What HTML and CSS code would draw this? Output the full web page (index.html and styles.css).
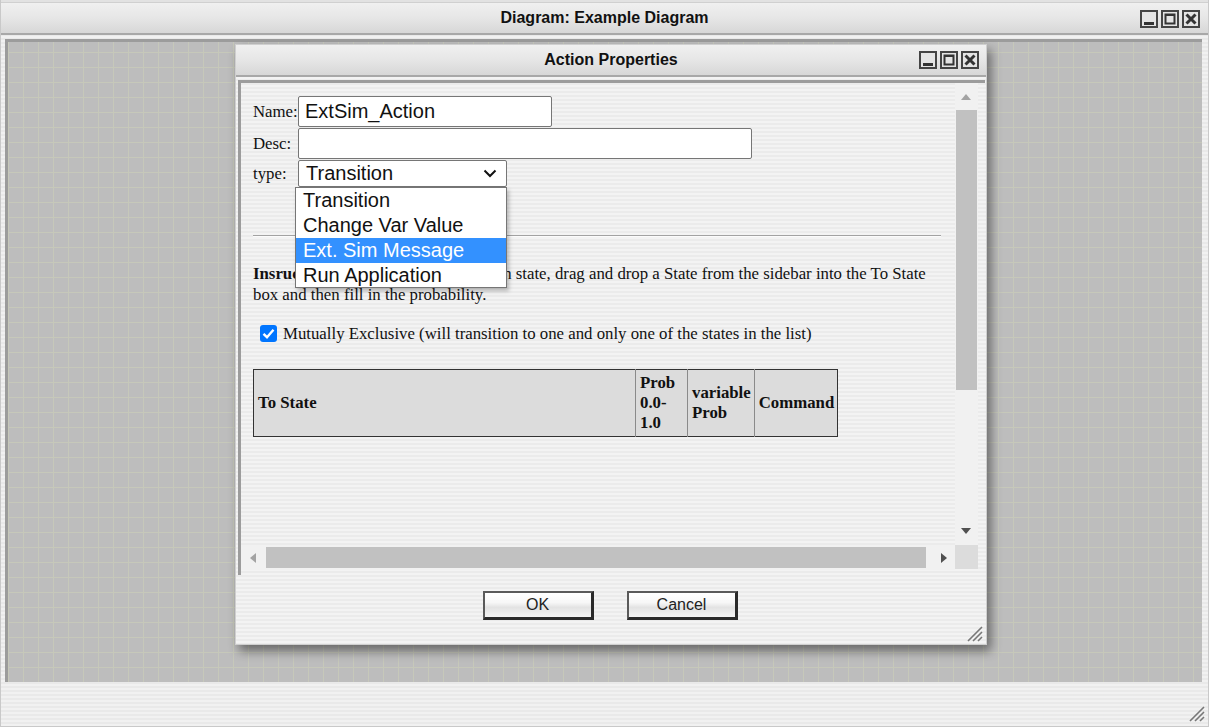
FILE: index.html
```html
<!DOCTYPE html>
<html>
<head>
<meta charset="utf-8">
<title>Diagram: Example Diagram</title>
<link rel="stylesheet" href="styles.css">
</head>
<body>
<div class="win">
  <div class="win-top"></div>
  <div class="titlebar">
    <span class="title">Diagram: Example Diagram</span>
    <div class="ctrls ctrls-outer">
      <svg class="wbtn" width="18" height="18" viewBox="0 0 18 18"><rect x="1" y="1" width="16" height="16" class="wb-bg"/><rect x="4" y="12" width="10" height="3" fill="#333"/></svg>
      <svg class="wbtn" width="18" height="18" viewBox="0 0 18 18"><rect x="1" y="1" width="16" height="16" class="wb-bg"/><rect x="4.5" y="4.5" width="9" height="9" fill="none" stroke="#333" stroke-width="2"/><rect x="4" y="4" width="10" height="2" fill="#333"/></svg>
      <svg class="wbtn" width="18" height="18" viewBox="0 0 18 18"><rect x="1" y="1" width="16" height="16" class="wb-bg"/><path d="M4.5 4.5 L13.5 13.5 M13.5 4.5 L4.5 13.5" stroke="#333" stroke-width="3"/></svg>
    </div>
  </div>
  <div class="win-body">
    <div class="canvas"></div>
  </div>
  <div class="win-foot">
    <svg class="grip" width="18" height="18" viewBox="0 0 18 18"><path d="M17 3 L3 17 M17 8 L8 17 M17 13 L13 17" stroke="#777" stroke-width="1.6"/></svg>
  </div>

  <div class="dialog">
    <div class="titlebar dtitle">
      <span class="title">Action Properties</span>
      <div class="ctrls ctrls-dlg">
        <svg class="wbtn" width="18" height="18" viewBox="0 0 18 18"><rect x="1" y="1" width="16" height="16" class="wb-bg"/><rect x="4" y="12" width="10" height="3" fill="#333"/></svg>
        <svg class="wbtn" width="18" height="18" viewBox="0 0 18 18"><rect x="1" y="1" width="16" height="16" class="wb-bg"/><rect x="4.5" y="4.5" width="9" height="9" fill="none" stroke="#333" stroke-width="2"/><rect x="4" y="4" width="10" height="2" fill="#333"/></svg>
        <svg class="wbtn" width="18" height="18" viewBox="0 0 18 18"><rect x="1" y="1" width="16" height="16" class="wb-bg"/><path d="M4.5 4.5 L13.5 13.5 M13.5 4.5 L4.5 13.5" stroke="#333" stroke-width="3"/></svg>
      </div>
    </div>
    <div class="pane">
      <div class="scroller">
        <div class="content">
          <div class="frow"><span class="flabel">Name:</span><div class="field f-name">ExtSim_Action</div></div>
          <div class="frow"><span class="flabel">Desc:</span><div class="field f-desc"></div></div>
          <div class="frow"><span class="flabel">type:</span><div class="field f-select">Transition
            <svg class="chev" width="14" height="9" viewBox="0 0 14 9"><path d="M1.5 1.5 L7 7 L12.5 1.5" fill="none" stroke="#111" stroke-width="2"/></svg></div></div>
          <div class="rule"></div>
          <p class="instr"><b>Insructions:</b> To add another transition state, drag and drop a State from the sidebar into the To State box and then fill in the probability.</p>
          <div class="chkrow">
            <span class="chk"><svg width="17" height="17" viewBox="0 0 17 17"><path d="M3.5 8.8 L7 12.2 L13.5 4.8" fill="none" stroke="#fff" stroke-width="2.4"/></svg></span>
            <span>Mutually Exclusive (will transition to one and only one of the states in the list)</span>
          </div>
          <table class="tbl">
            <tr>
              <th class="c1">To State</th>
              <th class="c2">Prob 0.0-1.0</th>
              <th class="c3">variable Prob</th>
              <th class="c4">Command</th>
            </tr>
          </table>
        </div>
        <div class="vscroll">
          <span class="arr arr-up"></span>
          <span class="vthumb"></span>
          <span class="arr arr-down"></span>
        </div>
        <div class="hscroll">
          <span class="arr arr-left"></span>
          <span class="hthumb"></span>
          <span class="arr arr-right"></span>
        </div>
        <div class="corner"></div>
      </div>
    </div>
    <div class="dfoot">
      <button class="btn">OK</button>
      <button class="btn">Cancel</button>
    </div>
    <svg class="dgrip" width="18" height="18" viewBox="0 0 18 18"><path d="M17 3 L3 17 M17 8 L8 17 M17 13 L13 17" stroke="#777" stroke-width="1.6"/></svg>

    <div class="dropdown">
      <div class="opt">Transition</div>
      <div class="opt">Change Var Value</div>
      <div class="opt sel">Ext. Sim Message</div>
      <div class="opt">Run Application</div>
    </div>
  </div>
</div>
</body>
</html>
```
FILE: styles.css
```css
* { box-sizing: border-box; }
html, body { margin: 0; padding: 0; }
body {
  font-family: "Liberation Serif", "Times New Roman", serif;
  font-size: 16.8px;
  color: #111;
  background: #ececec;
}
.win {
  position: relative;
  width: 1209px;
  height: 727px;
  border: 1px solid #c9c9c9;
  border-top: none;
  background: repeating-linear-gradient(to bottom, #f1f1f1 0 2px, #e9e9e9 2px 4px);
  display: flex;
  flex-direction: column;
  overflow: hidden;
}
.win-top {
  height: 3px;
  background: #e2e2e2;
  border-bottom: 1px solid #d0d0d0;
}
.titlebar {
  position: relative;
  height: 32px;
  flex: none;
  background: linear-gradient(to bottom, #f0f0f0 0%, #e6e6e6 50%, #d7d7d7 100%);
  border-bottom: 2px solid #a8a8a8;
  display: flex;
  align-items: center;
  justify-content: center;
}
.title {
  font-family: "Liberation Sans", Arial, sans-serif;
  font-weight: bold;
  font-size: 16px;
  color: #111;
  margin-top: -1px;
}
.ctrls {
  position: absolute;
  top: 7px;
  display: flex;
  gap: 3px;
}
.ctrls-outer { right: 8px; }
.ctrls-dlg { right: 7px; top: 6px; }
.wbtn { display: block; }
.wb-bg { fill: #e4e4e4; stroke: #444; stroke-width: 2; }
.win-body {
  padding: 4px 6px 0 4px;
  flex: none;
}
.canvas {
  height: 643px;
  border-top: 3px solid #9c9c9c;
  border-left: 3px solid #9c9c9c;
  background-color: #bdbdbd;
  background-image:
    linear-gradient(90deg, #c6c8ba 1px, transparent 1px),
    linear-gradient(to bottom, #c6c8ba 1px, transparent 1px);
  background-size: 15px 15px;
  background-position: 0 10px;
}
.win-foot {
  flex: 1;
  position: relative;
}
.grip { position: absolute; right: 3px; bottom: 4px; }

/* dialog */
.dialog {
  position: absolute;
  left: 234px;
  top: 44px;
  width: 752px;
  height: 601px;
  background: repeating-linear-gradient(to bottom, #f3f3f3 0 2px, #ebebeb 2px 4px);
  box-shadow: 4px 6px 10px rgba(0, 0, 0, 0.45);
  border: 1px solid #cfcfcf;
  display: flex;
  flex-direction: column;
}
.dtitle { height: 32px; }
.dtitle .title { margin-top: 0; }
.pane {
  margin: 3px 1px 0 2px;
  height: 495px;
  border-top: 3px solid #9c9c9c;
  border-left: 3px solid #9c9c9c;
  padding: 0 7px 5px 0;
  flex: none;
}
.scroller {
  height: 100%;
  display: grid;
  grid-template-columns: 1fr 23px;
  grid-template-rows: 1fr 25px;
}
.content {
  overflow: hidden;
  padding: 13px 14px 0 12px;
}
.frow {
  display: flex;
  align-items: center;
  margin-bottom: 1px;
}
.flabel {
  width: 45px;
  flex: none;
}
.field {
  background: #fff;
  border: 1px solid #767676;
  border-radius: 2px;
  font-family: "Liberation Sans", Arial, sans-serif;
  font-size: 20px;
  color: #111;
  padding-left: 6px;
  display: flex;
  align-items: center;
}
.f-name { width: 254px; height: 31px; }
.f-desc { width: 454px; height: 31px; }
.f-select {
  width: 209px;
  height: 27px;
  padding-left: 7px;
  position: relative;
}
.chev { position: absolute; right: 9px; top: 8px; }
.rule {
  margin-top: 48px;
  height: 1px;
  background: #a2a2a2;
  box-shadow: 0 1px 0 #fbfbfb;
}
.instr {
  margin: 27px 0 0 0;
  line-height: 21px;
}
.chkrow {
  display: flex;
  align-items: center;
  margin-top: 18px;
  margin-left: 7px;
  height: 21px;
}
.chk {
  width: 17px;
  height: 17px;
  border-radius: 3px;
  background: #0075ff;
  margin-right: 6px;
  display: block;
}
.chk svg { display: block; }
.tbl {
  margin-top: 25px;
  border-collapse: collapse;
  border: 1px solid #333;
  background: #dcdcdc;
}
.tbl th {
  font-weight: bold;
  text-align: left;
  vertical-align: middle;
  line-height: 20px;
  padding: 2px 3px 2px 4px;
  border-left: 1px solid #8a8a8a;
  height: 67px;
}
.tbl .c1 { width: 382px; border-left: none; }
.tbl .c2 { width: 52px; }
.tbl .c3 { width: 66px; }
.tbl .c4 { width: 82px; }

.vscroll {
  position: relative;
  background: #f1f1f1;
}
.vthumb {
  position: absolute;
  left: 1px;
  right: 1px;
  top: 27px;
  height: 280px;
  background: #c1c1c1;
}
.hscroll {
  position: relative;
  background: #f1f1f1;
}
.hthumb {
  position: absolute;
  left: 25px;
  width: 660px;
  top: 2px;
  height: 21px;
  background: #c1c1c1;
}
.corner { background: #dcdcdc; margin-bottom: 1px; }
.arr { position: absolute; width: 0; height: 0; }
.arr-up {
  left: 6px; top: 11px;
  border-left: 5px solid transparent;
  border-right: 5px solid transparent;
  border-bottom: 6px solid #a3a3a3;
}
.arr-down {
  left: 6px; bottom: 11px;
  border-left: 5px solid transparent;
  border-right: 5px solid transparent;
  border-top: 6px solid #505050;
}
.arr-left {
  left: 9px; top: 8px;
  border-top: 5px solid transparent;
  border-bottom: 5px solid transparent;
  border-right: 6px solid #a3a3a3;
}
.arr-right {
  right: 8px; top: 8px;
  border-top: 5px solid transparent;
  border-bottom: 5px solid transparent;
  border-left: 6px solid #505050;
}
.dfoot {
  display: flex;
  justify-content: center;
  gap: 33px;
  margin-top: 16px;
  padding-right: 2px;
}
.btn {
  width: 111px;
  height: 29px;
  font-family: "Liberation Sans", Arial, sans-serif;
  font-size: 16px;
  color: #222;
  border-style: solid;
  border-width: 2px 3px 3px 2px;
  border-color: #5a5a5a #2a2a2a #2a2a2a #5a5a5a;
  background: linear-gradient(to bottom, #ffffff 0%, #f7f7f7 40%, #e3e3e3 60%, #f4f4f4 100%);
  padding: 0;
}
.dgrip { position: absolute; right: 3px; bottom: 2px; }

.dropdown {
  position: absolute;
  left: 59px;
  top: 142px;
  width: 212px;
  height: 101px;
  background: #fff;
  border: 1px solid #767676;
  box-shadow: 2px 3px 4px rgba(0, 0, 0, 0.25);
  font-family: "Liberation Sans", Arial, sans-serif;
  font-size: 20px;
  color: #111;
}
.opt {
  height: 25px;
  line-height: 25px;
  padding-left: 7px;
  white-space: nowrap;
}
.opt.sel { background: #3391ff; color: #fff; }
```
